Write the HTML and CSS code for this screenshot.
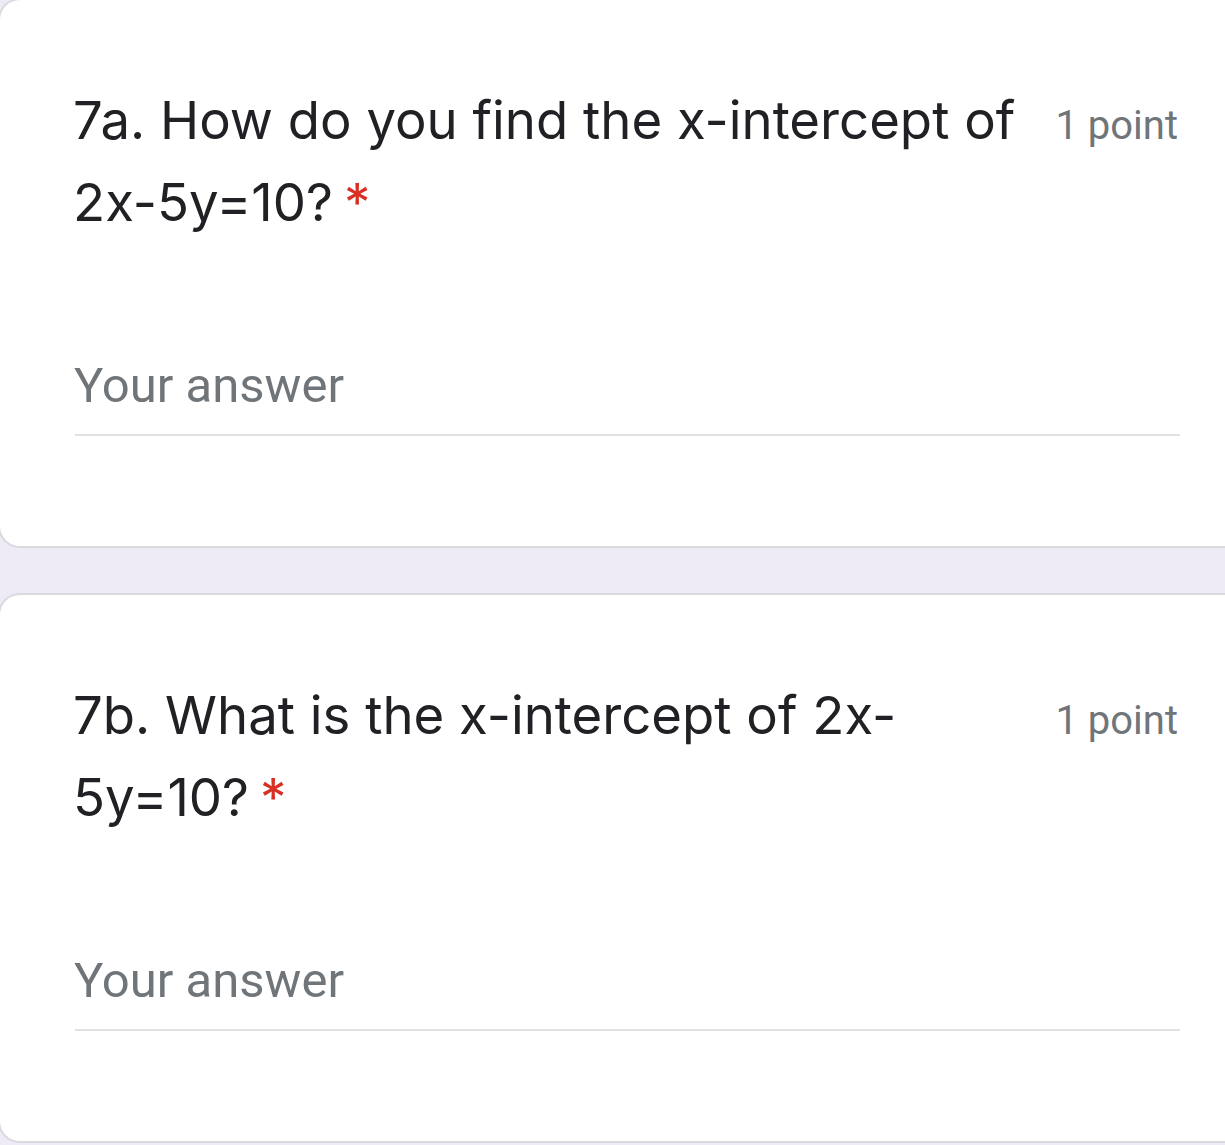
FILE: index.html
```html
<!DOCTYPE html>
<html lang="en">
<head>
<meta charset="utf-8">
<title>Form questions</title>
<link rel="stylesheet" href="styles.css">
</head>
<body>
<main class="form">
  <section class="card">
    <div class="q-head">
      <div class="q-title">7a. How do you find the x-intercept of 2x-5y=10?<span class="req">*</span></div>
      <div class="q-points">1 point</div>
    </div>
    <div class="answer">Your answer</div>
  </section>
  <section class="card">
    <div class="q-head">
      <div class="q-title">7b. What is the x-intercept of 2x-5y=10?<span class="req">*</span></div>
      <div class="q-points">1 point</div>
    </div>
    <div class="answer">Your answer</div>
  </section>
</main>
</body>
</html>
```
FILE: styles.css
```css
html, body {
  margin: 0;
  padding: 0;
  overflow: hidden;
}
body {
  background: #eeebf6;
}
.form {
  display: flex;
  flex-direction: column;
  gap: 45px;
  margin-top: -2px;
}
.card {
  background: #ffffff;
  border: 2px solid #d9d9de;
  border-right: none;
  border-radius: 22px 0 0 22px;
  margin-left: -2px;
  margin-right: -20px;
  padding: 79px 67px 110px 73px;
  height: 550px;
  box-sizing: border-box;
}
.q-head {
  display: flex;
  align-items: baseline;
  gap: 24px;
}
.q-title {
  flex: 1;
  font-family: "Inter", "Open Sans", sans-serif;
  font-size: 52.7px;
  line-height: 82px;
  color: #202124;
}
.req {
  color: #d93025;
  margin-left: 11px;
}
.q-points {
  flex: none;
  font-family: "Roboto", sans-serif;
  font-size: 40px;
  line-height: 48px;
  color: #70757a;
}
.answer {
  margin: 114px -2px 0 2px;
  text-indent: -1px;
  font-family: "Roboto", sans-serif;
  font-size: 49px;
  line-height: 58px;
  color: #70757a;
  padding-bottom: 19px;
  border-bottom: 2px solid #e0e1e3;
}
```
